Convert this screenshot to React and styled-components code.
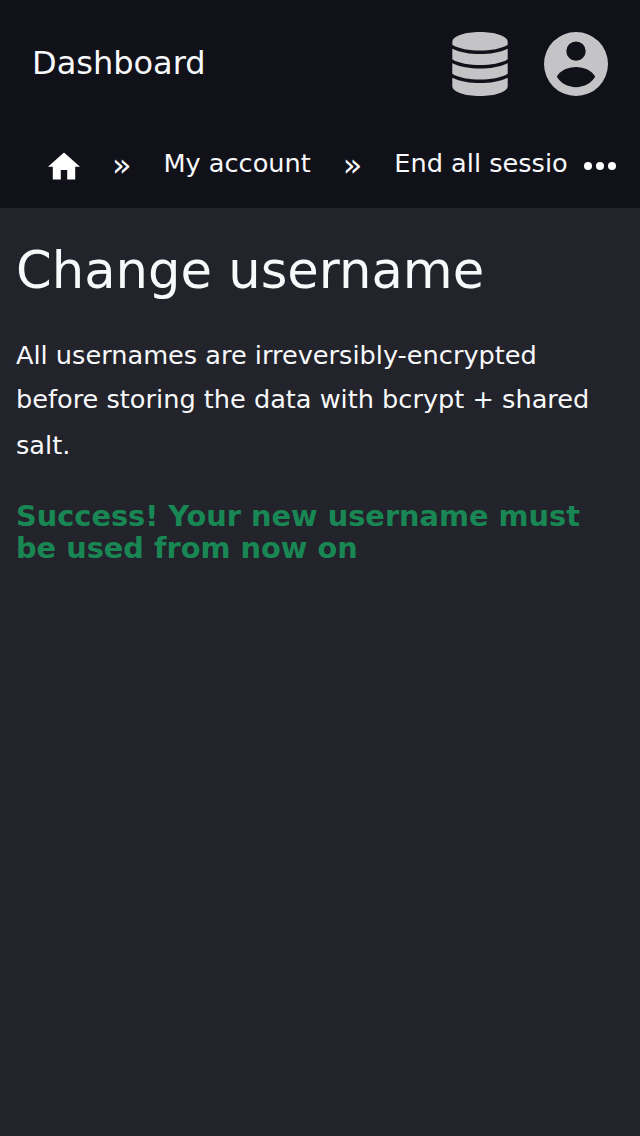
import React from "react";
import styled, { createGlobalStyle } from "styled-components";

const GlobalStyle = createGlobalStyle`
  * { box-sizing: border-box; }
  body { margin: 0; background: #23232b; color: #f8f9fa; font-family: "DejaVu Sans", sans-serif; }
`;
const Page = styled.div`
  min-height: 1136px;
`;
const Header = styled.header`
  background: #11111a;
  height: 208px;
`;
const TopBar = styled.div`
  display: flex;
  align-items: center;
  height: 128px;
  padding: 0 32px;
`;
const Brand = styled.span`
  flex: 1;
  font-size: 32px;
  line-height: 38px;
  padding-bottom: 2px;
`;
const Actions = styled.div`
  display: flex;
  align-items: center;
  gap: 36px;
  color: #c4c4c6;
`;
const DatabaseIcon = styled.svg`
  width: 56px;
  height: 64px;
`;
const AccountIcon = styled.svg`
  width: 64px;
  height: 64px;
`;
const Crumbs = styled.nav`
  display: flex;
  height: 80px;
  padding: 16px 24px 0 48px;
`;
const Trail = styled.div`
  display: flex;
  width: 520px;
  overflow: hidden;
  white-space: nowrap;
  font-size: 25.6px;
  line-height: 38px;
`;
const HomeIcon = styled.svg`
  flex: none;
  width: 32px;
  height: 28px;
  margin-top: 8px;
  color: #fff;
`;
const Separator = styled.span`
  flex: none;
  width: 83.5px;
  padding: 2px 0 0 32px;
  font-size: 32px;
`;
const Crumb = styled.span`
  flex: none;
`;
const More = styled.svg`
  width: 32px;
  height: 8px;
  margin: 18px 0 0 16px;
  color: #fff;
`;
const Content = styled.main`
  padding: 32px 16px;
`;
const Title = styled.h1`
  margin: 0;
  font-size: 51.2px;
  font-weight: 400;
  line-height: 60px;
`;
const Paragraph = styled.p`
  margin: 33px 0 0;
  font-size: 25.6px;
  line-height: 44.8px;
`;
const Line = styled.span`
  display: block;
  line-height: ${(p) => p.$height}px;
`;
const Success = styled.p`
  margin: 31px 0 0;
  font-size: 28.8px;
  font-weight: 700;
  line-height: 32px;
  color: #198754;
`;

export default function App() {
  return (
    <Page>
      <GlobalStyle />
      <Header>
        <TopBar>
          <Brand>Dashboard</Brand>
          <Actions>
            <DatabaseIcon viewBox="0 0 56 64" fill="currentColor">
              <path d="M.3 10C.3 4 13 0 28 0S55.700 4 55.700 10V12.800C50 16.800 38 18.600 28 18.600S6 16.800 .3 12.800Z" />
              <path d="M.3 16.700C8 20.500 18 22 28 22S48 20.500 55.700 16.700V27.300C50 31.300 38 33.100 28 33.100S6 31.300 .3 27.300Z" />
              <path d="M.3 31.200C8 35 18 36.500 28 36.500S48 35 55.700 31.200V41.800C50 45.800 38 47.600 28 47.600S6 45.800 .3 41.800Z" />
              <path d="M.3 45.700C8 49.500 18 51 28 51S48 49.500 55.700 45.700V54C55.700 60 43 64 28 64S.3 60 .3 54Z" />
            </DatabaseIcon>
            <AccountIcon viewBox="0 0 64 64" fill="currentColor">
              <path
                fillRule="evenodd"
                d="M32 0a32 32 0 1 1 0 64a32 32 0 1 1 0-64ZM32 9.400a9.700 9.700 0 1 0 0 19.400a9.700 9.700 0 1 0 0-19.400ZM12.800 44.600C16 51 24 55.200 32 55.200S48 51 51.200 44.600C48 38.500 40 35 32 35S16 38.500 12.800 44.600Z"
              />
            </AccountIcon>
          </Actions>
        </TopBar>
        <Crumbs>
          <Trail>
            <HomeIcon viewBox="0 0 32 28" fill="currentColor">
              <path d="M12.800 27.600V18h6.400v9.600h8V14.800H32L16 .4 0 14.800h4.800v12.800Z" />
            </HomeIcon>
            <Separator>»</Separator>
            <Crumb>My account</Crumb>
            <Separator>»</Separator>
            <Crumb>End all sessio</Crumb>
          </Trail>
          <More viewBox="0 0 32 8" fill="currentColor">
            <circle cx="4" cy="4" r="4" />
            <circle cx="16" cy="4" r="4" />
            <circle cx="28" cy="4" r="4" />
          </More>
        </Crumbs>
      </Header>
      <Content>
        <Title>Change username</Title>
        <Paragraph>
          <Line $height={44.8}>All usernames are irreversibly-encrypted </Line>
          <Line $height={43.2}>before storing the data with bcrypt + shared </Line>
          <Line $height={48.4}>salt.</Line>
        </Paragraph>
        <Success>Success! Your new username must be used from now on</Success>
      </Content>
    </Page>
  );
}
